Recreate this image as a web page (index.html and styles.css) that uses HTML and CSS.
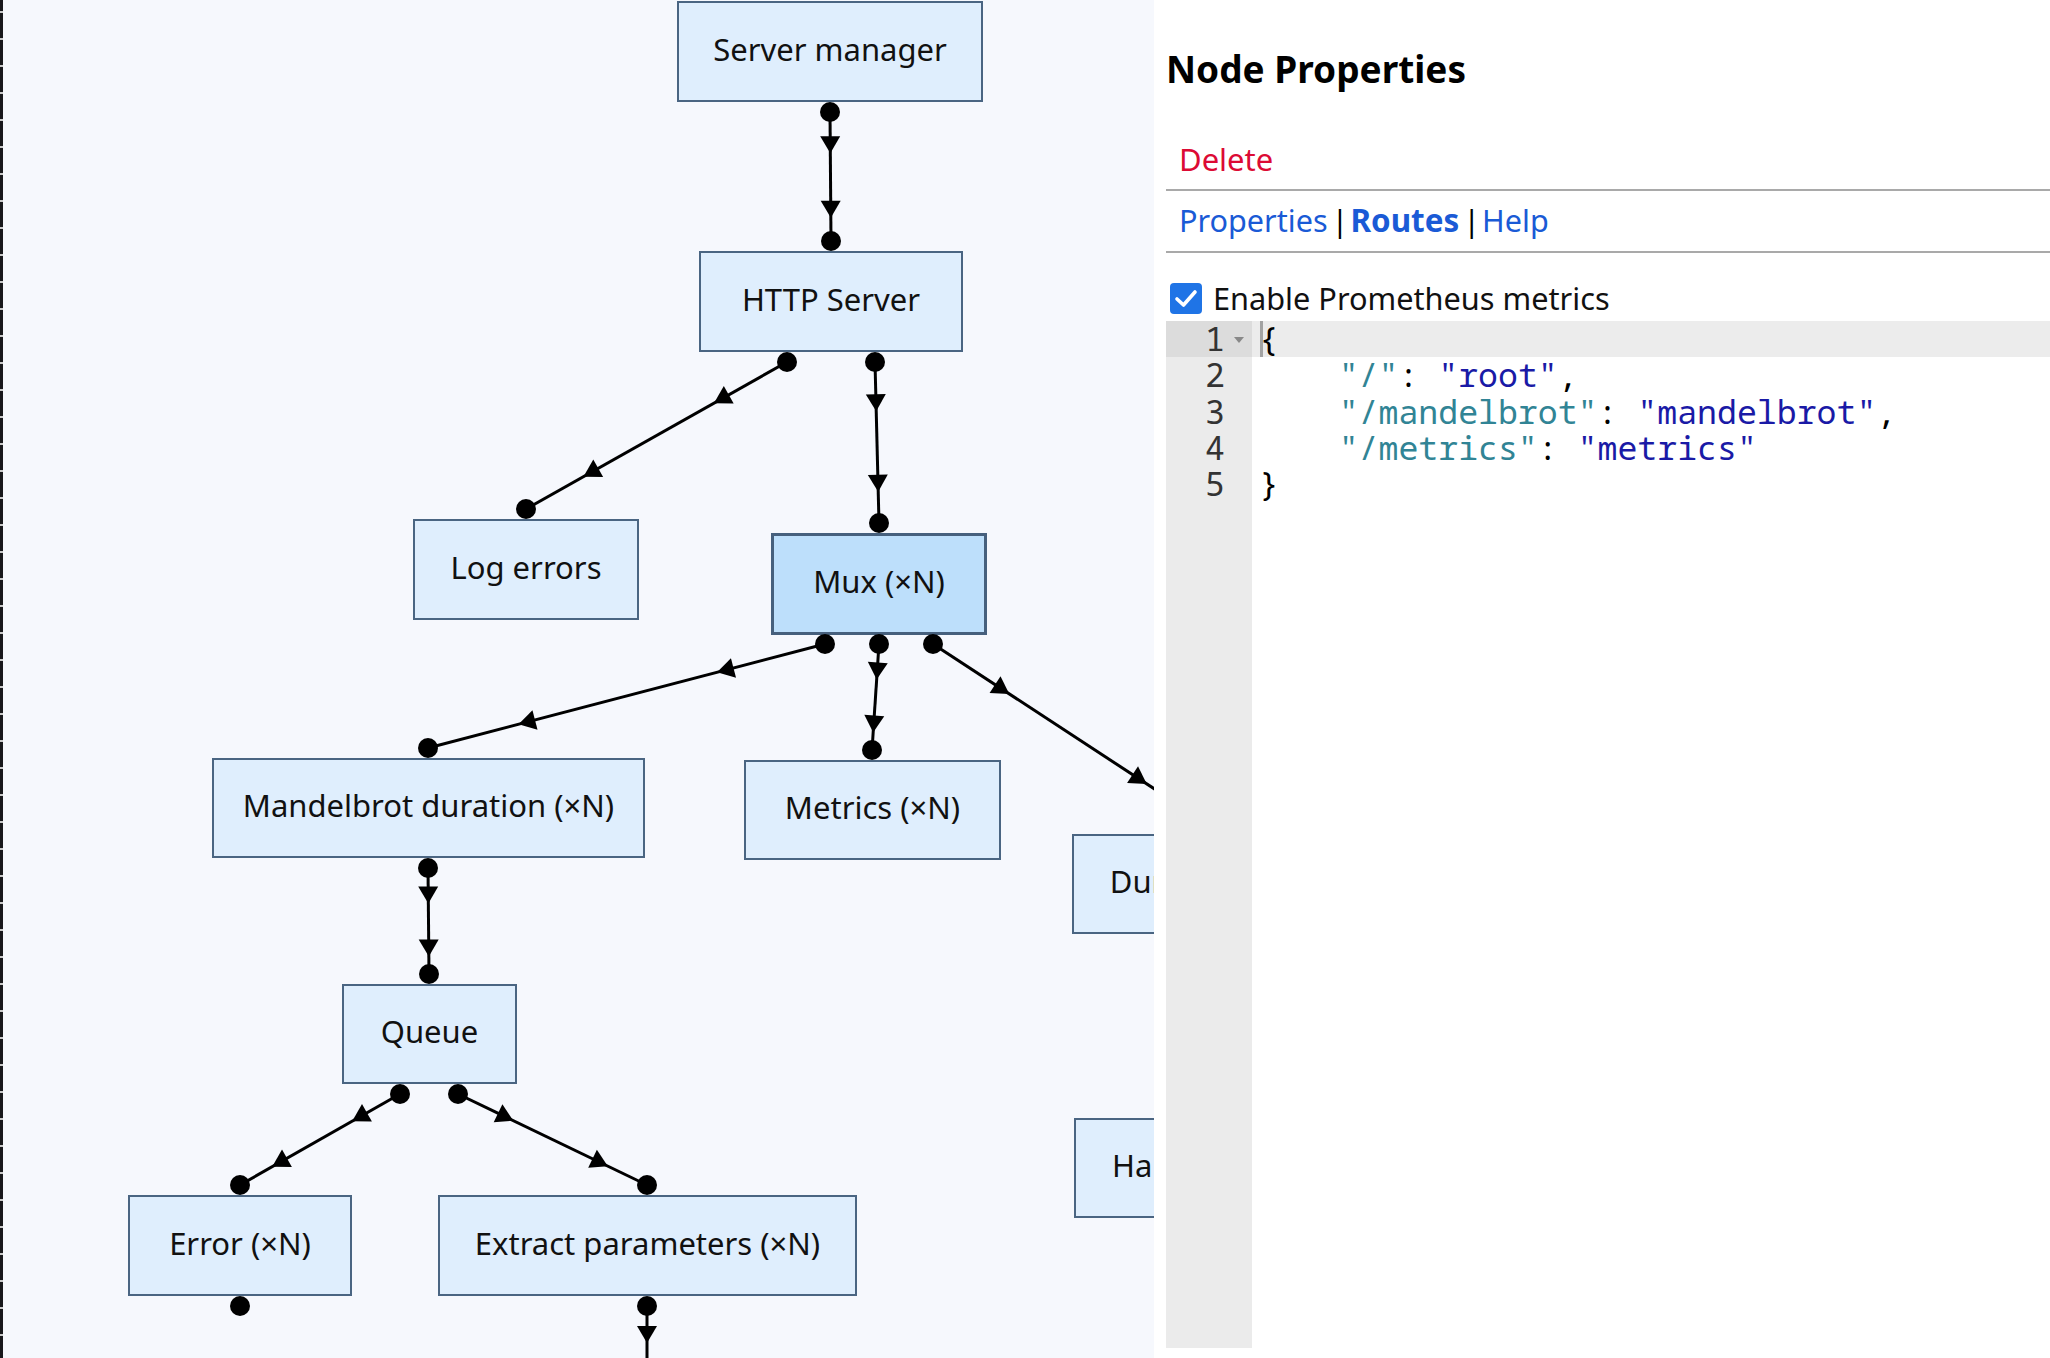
FILE: index.html
```html
<!DOCTYPE html>
<html>
<head>
    <link rel="stylesheet" href="styles.css">
</head>
<body>
    <div class="app">
        <div class="canvas">
            <div class="nodes"></div>
            <svg class="edges" width="1154" height="1358"></svg>
            <div class="canvas-edge"></div>
        </div>

        <div class="panel">
            <h1 class="panel-title">Node Properties</h1>
            <div class="actions"><a class="delete-link" href="#">Delete</a></div>
            <hr class="divider">
            <div class="tabs">
                <a href="#">Properties</a><span class="sep">|</span><a href="#" class="active">Routes</a><span class="sep">|</span><a href="#">Help</a>
            </div>
            <hr class="divider tabs-divider">
            <label class="check-row">
                <span class="checkbox">
                    <svg width="32" height="31" viewBox="0 0 32 31"><path d="M7 16 L13.5 22 L25 9" fill="none" stroke="#fff" stroke-width="3.6" stroke-linecap="round" stroke-linejoin="round"/></svg>
                </span>
                <span class="check-label">Enable Prometheus metrics</span>
            </label>
            <div class="editor">
                <div class="gutter">
                    <div class="gutter-cell active">1<span class="fold"></span></div>
                    <div class="gutter-cell">2</div>
                    <div class="gutter-cell">3</div>
                    <div class="gutter-cell">4</div>
                    <div class="gutter-cell">5</div>
                </div>
                <div class="code">
                    <div class="code-line active"><span class="cursor"></span>{</div>
                    <div class="code-line">    <span class="key">"/"</span>: <span class="str">"root"</span>,</div>
                    <div class="code-line">    <span class="key">"/mandelbrot"</span>: <span class="str">"mandelbrot"</span>,</div>
                    <div class="code-line">    <span class="key">"/metrics"</span>: <span class="str">"metrics"</span></div>
                    <div class="code-line">}</div>
                </div>
            </div>
        </div>
    </div>

    <script>
        const NODES = [
            { label: 'Server manager', x: 677, y: 1, w: 306, h: 101 },
            { label: 'HTTP Server', x: 699, y: 251, w: 264, h: 101 },
            { label: 'Log errors', x: 413, y: 519, w: 226, h: 101 },
            { label: 'Mux (×N)', x: 771, y: 533, w: 216, h: 102, selected: true },
            { label: 'Mandelbrot duration (×N)', x: 212, y: 758, w: 433, h: 100 },
            { label: 'Metrics (×N)', x: 744, y: 760, w: 257, h: 100 },
            { label: 'Duration (×N)', x: 1072, y: 834, w: 272, h: 100 },
            { label: 'Queue', x: 342, y: 984, w: 175, h: 100 },
            { label: 'Handler (×N)', x: 1074, y: 1118, w: 261, h: 100 },
            { label: 'Error (×N)', x: 128, y: 1195, w: 224, h: 101 },
            { label: 'Extract parameters (×N)', x: 438, y: 1195, w: 419, h: 101 }
        ];

        // [x1, y1, x2, y2] from output port to input port
        const EDGES = [
            [830, 112, 831, 241],
            [787, 362, 526, 509],
            [875, 362, 879, 523],
            [825, 644, 428, 748],
            [879, 644, 872, 750],
            [933, 644, 1208, 824],
            [428, 868, 429, 974],
            [400, 1094, 240, 1185],
            [458, 1094, 647, 1185],
            [647, 1306, 647, 1418]
        ];

        // ports that have nothing attached
        const LOOSE_PORTS = [[240, 1306]];

        const SVG_NS = 'http://www.w3.org/2000/svg';
        const nodesEl = document.querySelector('.nodes');
        const svg = document.querySelector('.edges');

        NODES.forEach(node => {
            const el = document.createElement('div');
            el.className = node.selected ? 'node selected' : 'node';
            el.textContent = node.label;
            el.style.left = node.x + 'px';
            el.style.top = node.y + 'px';
            el.style.width = node.w + 'px';
            el.style.height = node.h + 'px';
            nodesEl.appendChild(el);
        });

        function add(tag, attrs) {
            const el = document.createElementNS(SVG_NS, tag);
            for (const key in attrs) el.setAttribute(key, attrs[key]);
            svg.appendChild(el);
            return el;
        }

        function arrow(x1, y1, x2, y2, t) {
            const dx = x2 - x1, dy = y2 - y1;
            const len = Math.hypot(dx, dy);
            const ux = dx / len, uy = dy / len;
            const cx = x1 + dx * t, cy = y1 + dy * t;
            const bx = cx - ux * 8, by = cy - uy * 8;
            const pts = [
                [cx + ux * 9, cy + uy * 9],
                [bx - uy * 10, by + ux * 10],
                [bx + uy * 10, by - ux * 10]
            ];
            add('polygon', { points: pts.map(p => p.join(',')).join(' '), class: 'arrow' });
        }

        EDGES.forEach(([x1, y1, x2, y2]) => {
            add('line', { x1, y1, x2, y2, class: 'wire' });
            arrow(x1, y1, x2, y2, 0.25);
            arrow(x1, y1, x2, y2, 0.75);
            add('circle', { cx: x1, cy: y1, r: 10, class: 'port' });
            add('circle', { cx: x2, cy: y2, r: 10, class: 'port' });
        });

        LOOSE_PORTS.forEach(([cx, cy]) => add('circle', { cx, cy, r: 10, class: 'port' }));
    </script>
</body>
</html>
```

FILE: styles.css
```css
body {
    margin: 0;
    font-family: "Noto Sans", "Open Sans", sans-serif;
    background: #fff;
    color: #111;
}

.app {
    display: flex;
    height: 1358px;
    overflow: hidden;
}

/* diagram */

.canvas {
    position: relative;
    flex: none;
    width: 1154px;
    height: 100%;
    background: #f6f8fd;
    overflow: hidden;
}

.canvas-edge {
    position: absolute;
    left: 0;
    top: 0;
    bottom: 0;
    width: 3px;
    background: repeating-linear-gradient(to bottom, #18181c 0, #18181c 11px, #c9c9c9 11px, #c9c9c9 13px, #18181c 13px, #18181c 27px);
}

.edges {
    position: absolute;
    left: 0;
    top: 0;
}

.wire {
    stroke: #000;
    stroke-width: 3;
}

.arrow,
.port {
    fill: #000;
}

.node {
    position: absolute;
    box-sizing: border-box;
    display: flex;
    align-items: center;
    justify-content: center;
    padding-bottom: 6px;
    border: 2px solid #4a6582;
    background: #dfeefd;
    font-size: 31px;
    color: #111;
    white-space: nowrap;
}

.node.selected {
    border-width: 3.5px;
    border-color: #46607d;
    background: #bddffb;
}

/* properties panel */

.panel {
    flex: 1;
    min-width: 0;
    display: flex;
    flex-direction: column;
    padding-left: 12px;
}

.panel-title {
    margin: 47px 0 0;
    font-size: 37px;
    line-height: 44px;
    font-weight: 700;
    color: #000;
}

.actions {
    margin-top: 48px;
    padding-left: 13px;
    font-size: 31px;
    line-height: 40px;
}

.delete-link {
    color: #dc0a34;
    text-decoration: none;
}

.divider {
    margin: 10px 0 0;
    border: 0;
    height: 2px;
    background: #a9a9a9;
}

.tabs {
    margin-top: 9px;
    padding-left: 13px;
    font-size: 30.6px;
    line-height: 40px;
    color: #000;
}

.tabs a {
    color: #1a5ad6;
    text-decoration: none;
}

.tabs a.active {
    font-size: 31.4px;
    font-weight: 700;
}

.sep {
    margin: 0 2px 0 4px;
}

.tabs-divider {
    margin-top: 11px;
}

.check-row {
    display: flex;
    align-items: center;
    margin-top: 25px;
    height: 40px;
}

.checkbox {
    display: flex;
    width: 32px;
    height: 31px;
    margin-left: 4px;
    border-radius: 4px;
    background: #1f74e6;
}

.check-label {
    margin-left: 11px;
    font-size: 30.7px;
    line-height: 40px;
    color: #111;
}

/* code editor */

.editor {
    display: flex;
    margin-top: 3px;
    height: 1027px;
    font-family: "Noto Sans Mono", "DejaVu Sans Mono", monospace;
    font-size: 33.2px;
    line-height: 36.3px;
}

.gutter {
    flex: none;
    width: 86px;
    background: #ebebeb;
    color: #333;
}

.gutter-cell {
    position: relative;
    height: 36.3px;
    padding-right: 27px;
    text-align: right;
}

.gutter-cell.active {
    background: #dcdcdc;
}

.fold {
    position: absolute;
    right: 8px;
    top: 16px;
    border-left: 5px solid transparent;
    border-right: 5px solid transparent;
    border-top: 6px solid #888;
}

.code {
    flex: 1;
    color: #000;
}

.code-line {
    position: relative;
    height: 36.3px;
    padding-left: 7px;
    white-space: pre;
}

.code-line.active {
    background: #ececec;
}

.cursor {
    position: absolute;
    left: 8px;
    top: 0;
    width: 3px;
    height: 36.3px;
    background: #a3a3a3;
}

.key {
    color: #318495;
}

.str {
    color: #1a1aa6;
}
```
